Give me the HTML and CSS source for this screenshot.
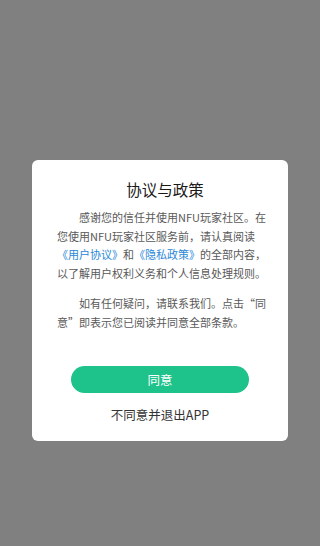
FILE: index.html
```
<!DOCTYPE html>
<html>
<head>
  <meta charset="utf-8">
  <title>协议与政策</title>
  <link rel="stylesheet" href="styles.css">
</head>
<body>
  <div id="mask">
    <div id="dialog">
      <div class="title">协议与政策</div>
      <p class="text">感谢您的信任并使用NFU玩家社区。在您使用NFU玩家社区服务前，请认真阅读<span class="link">《用户协议》</span>和<span class="link">《隐私政策》</span>的全部内容，以了解用户权利义务和个人信息处理规则。</p>
      <p class="text second">如有任何疑问，请联系我们。点击“同意”即表示您已阅读并同意全部条款。</p>
      <button class="agree">同意</button>
      <div class="refuse">不同意并退出APP</div>
    </div>
  </div>
</body>
</html>
```
FILE: styles.css
```
* {
  border: 0;
  padding: 0;
  margin: 0;
}
html, body {
  width: 320px;
  height: 546px;
  overflow: hidden;
}
body {
  background-color: #808080;
  font-family: "Noto Sans CJK SC", "Noto Sans", sans-serif;
}
#mask {
  height: 100%;
  padding-top: 160px;
  box-sizing: border-box;
}
#dialog {
  width: 256px;
  margin: 0 auto;
  background-color: #fff;
  border-radius: 6px;
  padding: 19px 20px 17px 25px;
  box-sizing: border-box;
  display: flex;
  flex-direction: column;
}
.title {
  font-size: 15.5px;
  line-height: 20px;
  font-weight: 400;
  color: #1a1a1a;
  text-align: center;
  margin-right: -5px;
}
.text {
  margin-top: 9px;
  font-size: 11px;
  line-height: 18.6px;
  color: #595959;
  text-indent: 2em;
}
.text.second {
  margin-top: 12px;
}
.link {
  color: #2b88d8;
  white-space: nowrap;
}
.agree {
  align-self: center;
  margin: 34px 0 0 -5px;
  width: 178px;
  height: 27px;
  border-radius: 14px;
  background-color: #1ec28b;
  color: #fff;
  font-family: inherit;
  font-size: 12.5px;
}
.refuse {
  margin: 13px 0 0 -5px;
  font-size: 12.5px;
  line-height: 18px;
  color: #333;
  text-align: center;
}
```
